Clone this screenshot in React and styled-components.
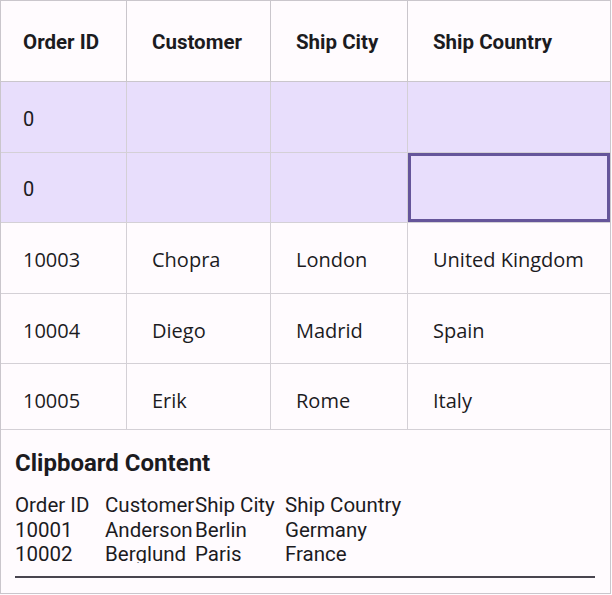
import React from 'react'
import styled, { createGlobalStyle } from 'styled-components';

const GlobalStyle = createGlobalStyle`
  html, body {
    margin: 0;
    padding: 0;
    background: #fffbfe;
  }
`;

const Frame = styled.div`
  width: 611px;
  height: 594px;
  box-sizing: border-box;
  border: 1px solid #cac6cc;
  background: #fffbfe;
  display: flex;
  flex-direction: column;
  color: #1c1b1f;
  overflow: hidden;
`;

const Grid = styled.div`
  display: grid;
  grid-template-columns: 126px 144px 137px 1fr;
  height: 428px;
  overflow: hidden;
  border-bottom: 1px solid #d4d0d6;
  flex-shrink: 0;
`;

const HeadCell = styled.div`
  display: flex;
  align-items: center;
  padding: 2px 0 0 ${(p) => p.pad || 23}px;
  box-sizing: border-box;
  border-bottom: 1px solid #cac6cc;
  border-right: ${(p) => (p.last ? 'none' : '1px solid #cac6cc')};
  font-family: Roboto, "Liberation Sans", sans-serif;
  font-weight: 700;
  font-size: 20.5px;
  height: 81px;
  white-space: nowrap;
`;

const Cell = styled.div`
  height: ${(p) => p.h}px;
  display: flex;
  align-items: center;
  padding: 3px 0 0 ${(p) => p.pad || 23}px;
  box-sizing: border-box;
  background: ${(p) => (p.added ? '#e8defc' : '#fffbfe')};
  border-bottom: 1px solid #d4d0d6;
  border-right: ${(p) => (p.last ? 'none' : '1px solid #d4d0d6')};
  box-shadow: ${(p) => (p.focused ? 'inset 0 0 0 3px #65559a' : 'none')};
  font-family: ${(p) => (p.added ? 'Roboto, "Liberation Sans", sans-serif' : '"Open Sans", "Noto Sans", sans-serif')};
  font-size: 20px;
  white-space: nowrap;
`;

const Clipboard = styled.div`
  flex: 1;
  padding: 18px 15px 0 14px;
  display: flex;
  flex-direction: column;
`;

const Title = styled.h3`
  margin: 0;
  font-family: Roboto, "Liberation Sans", sans-serif;
  font-weight: 700;
  font-size: 24px;
  line-height: 30px;
  white-space: nowrap;
`;

const TextArea = styled.div`
  margin-top: 15px;
  font-family: Roboto, "Liberation Sans", sans-serif;
  font-size: 20.5px;
  line-height: 24.5px;
  border-bottom: 2px solid #49454f;
  padding-bottom: 13px;
  width: 580px;
`;

const ClipLines = styled.div`
  height: 70px;
  overflow: hidden;
`;

const ClipRow = styled.div`
  display: grid;
  grid-template-columns: 90px 90px 90px 1fr;
  white-space: nowrap;
`;

const heads = [
  { label: 'Order ID', pad: 22 },
  { label: 'Customer', pad: 25 },
  { label: 'Ship City', pad: 25 },
  { label: 'Ship Country', pad: 25 },
];

const rows = [
  { cells: ['0', '', '', ''], added: true, h: 71 },
  { cells: ['0', '', '', ''], added: true, h: 70, focus: 3 },
  { cells: ['10003', 'Chopra', 'London', 'United Kingdom'], h: 71 },
  { cells: ['10004', 'Diego', 'Madrid', 'Spain'], h: 70 },
  { cells: ['10005', 'Erik', 'Rome', 'Italy'], h: 71 },
];

const clip = [
  ['Order ID', 'Customer', 'Ship City', 'Ship Country'],
  ['10001', 'Anderson', 'Berlin', 'Germany'],
  ['10002', 'Berglund', 'Paris', 'France'],
];

const App = () => {
  return (
    <>
      <GlobalStyle />
      <Frame>
        <Grid>
          {heads.map((h, i) => (
            <HeadCell key={h.label} pad={h.pad} last={i === 3}>
              {h.label}
            </HeadCell>
          ))}
          {rows.map((r, ri) =>
            r.cells.map((c, ci) => (
              <Cell
                key={ri + '-' + ci}
                h={r.h}
                added={r.added}
                last={ci === 3}
                pad={ci === 0 ? 22 : 25}
                focused={r.focus === ci}
              >
                {c}
              </Cell>
            ))
          )}
        </Grid>
        <Clipboard>
          <Title>Clipboard Content</Title>
          <TextArea>
            <ClipLines>
              {clip.map((line, i) => (
                <ClipRow key={i}>
                  {line.map((t, j) => (
                    <span key={j}>{t}</span>
                  ))}
                </ClipRow>
              ))}
            </ClipLines>
          </TextArea>
        </Clipboard>
      </Frame>
    </>
  );
};

export default App;
